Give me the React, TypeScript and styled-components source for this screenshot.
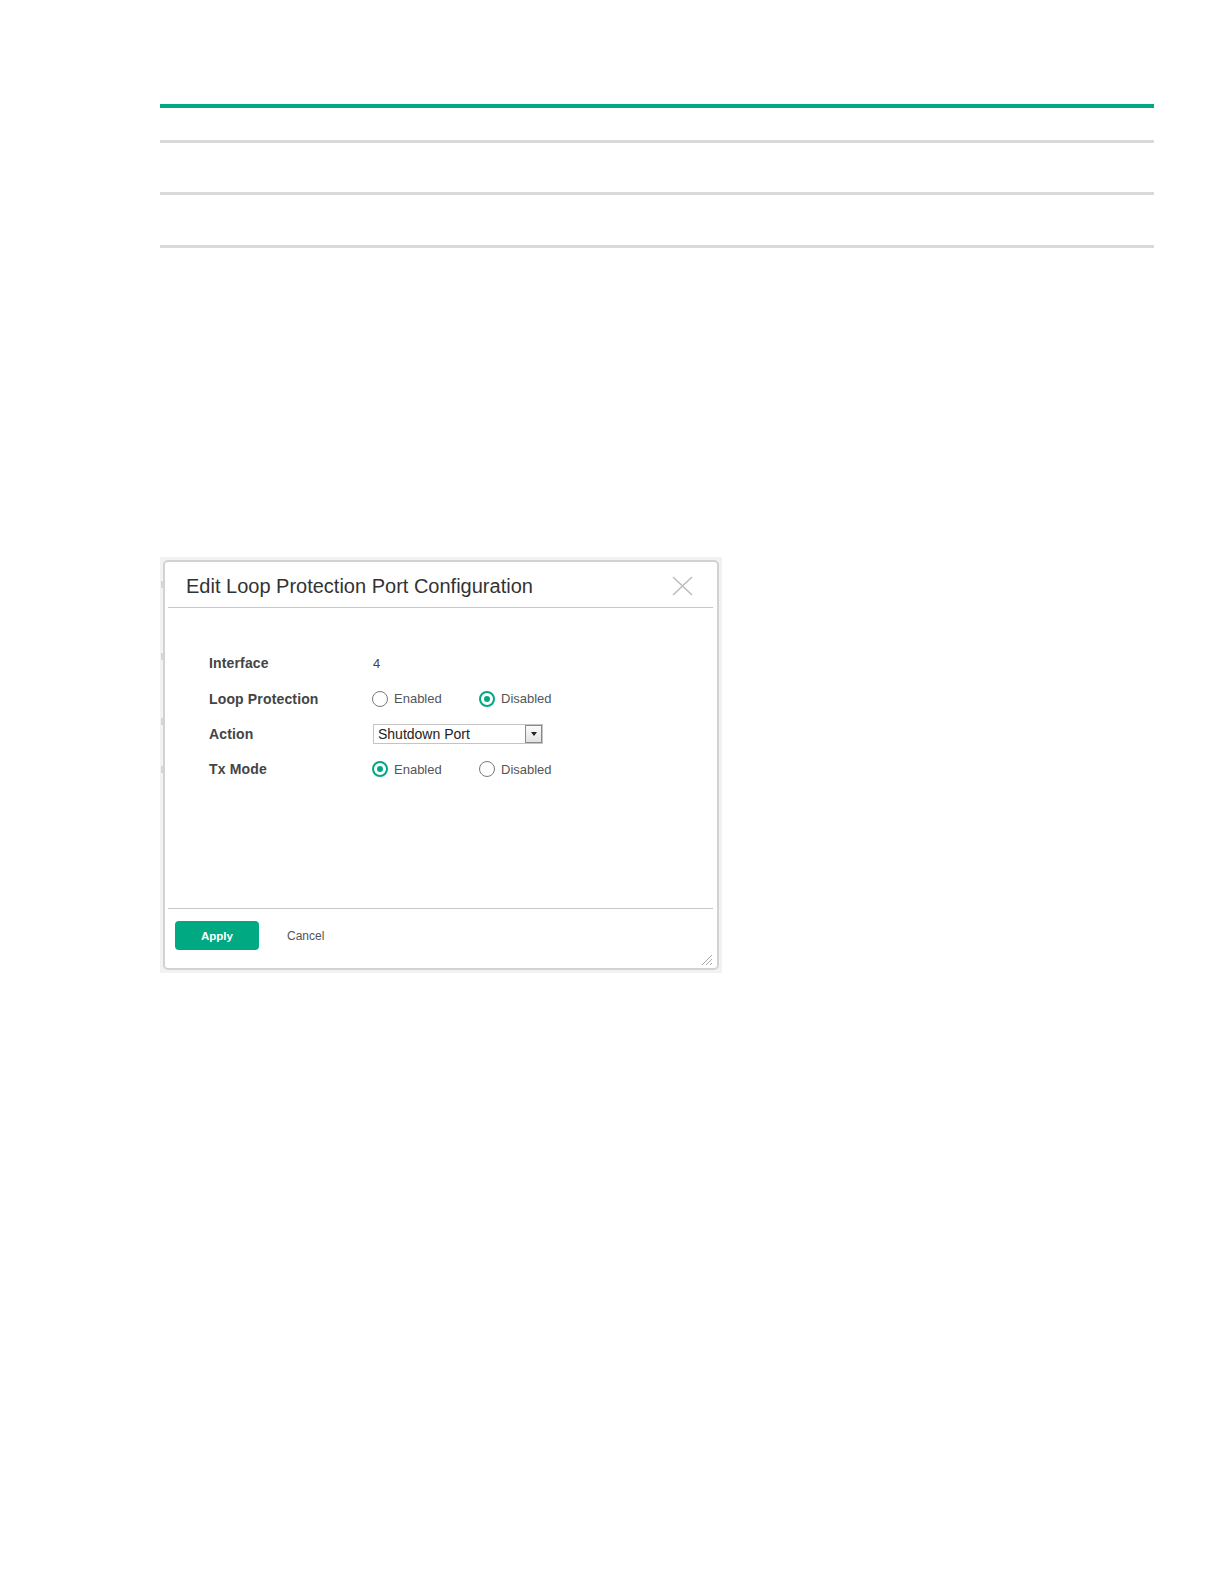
import React from 'react';
import styled, { createGlobalStyle } from 'styled-components';

const GlobalStyle = createGlobalStyle`
    body {
        margin: 0;
        background: #ffffff;
        font-family: "Liberation Sans", Arial, sans-serif;
    }
`

const Page = styled.div`
    width: 1224px;
    height: 1584px;
    padding: 104px 0 0 160px;
    box-sizing: border-box;
`

const Rule = styled.div<{ $green?: boolean; $gap: number }>`
    width: 994px;
    height: ${p => (p.$green ? 4 : 3)}px;
    margin-bottom: ${p => p.$gap}px;
    background: ${p => (p.$green ? '#01a982' : '#d9d9d9')};
`

const Backdrop = styled.div`
    position: relative;
    margin-top: 309px;
    width: 562px;
    height: 416px;
    padding: 3px;
    box-sizing: border-box;
    background: #f2f2f2;
`

const Mark = styled.span<{ $top: number }>`
    position: absolute;
    left: 1px;
    top: ${p => p.$top}px;
    width: 2px;
    height: 7px;
    background: #d6d6d6;
`

const Dialog = styled.div`
    height: 100%;
    box-sizing: border-box;
    border: 2px solid #d2d2d2;
    border-radius: 5px;
    background: #ffffff;
    display: flex;
    flex-direction: column;
    position: relative;
`

const Header = styled.div`
    height: 45px;
    padding: 3px 24px 0 21px;
    box-sizing: border-box;
    display: flex;
    align-items: center;
    justify-content: space-between;
`

const Title = styled.span`
    font-size: 20px;
    color: #333333;
`

const Divider = styled.div`
    height: 1px;
    margin: 0 4px 0 3px;
    background: #c8c8c8;
`

const Body = styled.div`
    height: 300px;
    padding: 37.5px 0 0 44px;
    box-sizing: border-box;
`

const Row = styled.div`
    height: 35.4px;
    display: flex;
    align-items: center;
`

const Label = styled.span`
    width: 164px;
    font-size: 14px;
    font-weight: bold;
    letter-spacing: 0.15px;
    color: #444444;
`

const Value = styled.span`
    font-size: 13px;
    color: #444444;
`

const Option = styled.label`
    width: 108px;
    display: flex;
    align-items: center;
    gap: 6px;
    margin-left: -1px;
    font-size: 13px;
    color: #555555;
`

const Radio = styled.span<{ $on?: boolean }>`
    width: 16px;
    height: 16px;
    box-sizing: border-box;
    border-radius: 50%;
    border: ${p => (p.$on ? '2px solid #01a982' : '1.5px solid #7a7a7a')};
    display: flex;
    align-items: center;
    justify-content: center;
    &::after {
        content: '';
        display: ${p => (p.$on ? 'block' : 'none')};
        width: 6px;
        height: 6px;
        border-radius: 50%;
        background: #01a982;
    }
`

const Select = styled.div`
    width: 170px;
    height: 20px;
    box-sizing: border-box;
    border: 1px solid #c4c4c4;
    display: flex;
    align-items: center;
    justify-content: space-between;
    padding-left: 4px;
    font-size: 14px;
    color: #222222;
`

const Arrow = styled.span`
    width: 17px;
    height: 18px;
    box-sizing: border-box;
    border: 1px solid #8a8a8a;
    background: linear-gradient(#fbfbfb, #e2e2e2);
    display: flex;
    align-items: center;
    justify-content: center;
    &::after {
        content: '';
        border-left: 3.5px solid transparent;
        border-right: 3.5px solid transparent;
        border-top: 4px solid #222222;
    }
`

const Footer = styled.div`
    flex: 1;
    padding: 12px 0 0 10px;
    display: flex;
    align-items: flex-start;
    gap: 28px;
`

const ApplyButton = styled.button`
    width: 84px;
    height: 29px;
    border: none;
    border-radius: 4px;
    background: #01a982;
    color: #ffffff;
    font-family: inherit;
    font-size: 11.5px;
    font-weight: bold;
`

const CancelButton = styled.button`
    height: 29px;
    padding: 0;
    border: none;
    background: none;
    color: #555555;
    font-family: inherit;
    font-size: 12px;
`

const Grip = styled.svg`
    position: absolute;
    right: 4px;
    bottom: 2px;
`

function RadioGroup(props: { value: 'on' | 'off' }) {
    return (
        <>
            <Option><Radio $on={props.value === 'on'} />Enabled</Option>
            <Option><Radio $on={props.value === 'off'} />Disabled</Option>
        </>
    )
}

export default function App() {
    return (
        <Page>
            <GlobalStyle />
            <Rule $green $gap={32} />
            <Rule $gap={49} />
            <Rule $gap={50} />
            <Rule $gap={0} />

            <Backdrop>
                <Mark $top={24} />
                <Mark $top={96} />
                <Mark $top={161} />
                <Mark $top={209} />
                <Dialog>
                    <Header>
                        <Title>Edit Loop Protection Port Configuration</Title>
                        <svg width="21" height="20" viewBox="0 0 21 20">
                            <path d="M1 1 L20 19 M20 1 L1 19" stroke="#bdbdbd" strokeWidth="1.6" fill="none" />
                        </svg>
                    </Header>
                    <Divider />
                    <Body>
                        <Row>
                            <Label>Interface</Label>
                            <Value>4</Value>
                        </Row>
                        <Row>
                            <Label>Loop Protection</Label>
                            <RadioGroup value="off" />
                        </Row>
                        <Row>
                            <Label>Action</Label>
                            <Select>
                                Shutdown Port
                                <Arrow />
                            </Select>
                        </Row>
                        <Row>
                            <Label>Tx Mode</Label>
                            <RadioGroup value="on" />
                        </Row>
                    </Body>
                    <Divider />
                    <Footer>
                        <ApplyButton>Apply</ApplyButton>
                        <CancelButton>Cancel</CancelButton>
                    </Footer>
                    <Grip width="12" height="12" viewBox="0 0 12 12">
                        <path d="M1 11 L11 1 M5 11 L11 5 M9 11 L11 9" stroke="#a8a8a8" strokeWidth="1" fill="none" />
                    </Grip>
                </Dialog>
            </Backdrop>
        </Page>
    )
}
